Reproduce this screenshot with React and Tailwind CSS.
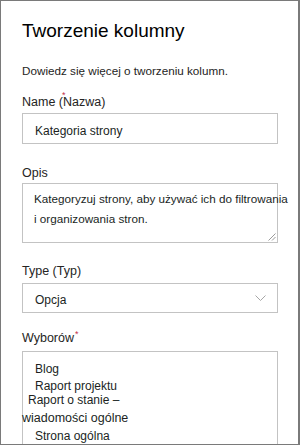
import React from "react";

const Asterisk = ({ className = "" }) => (
  <span className={`text-[#c4314b] text-[9px] leading-none ${className}`}>*</span>
);

const App = () => {
  return (
    <div className="w-[300px] h-[445px] overflow-hidden bg-white border border-[#7a7a7a] border-r-2 pl-[21px] pr-[20px] pt-[18px] font-['Liberation_Sans',Arial,sans-serif] text-[#201f1e]">
      {/* Title */}
      <h1 className="text-[19px] leading-[24px] text-black">Tworzenie kolumny</h1>

      <p className="mt-[20px] text-[11.7px] leading-[16px] text-[#252423]">
        Dowiedz się więcej o tworzeniu kolumn.
      </p>

      {/* Name */}
      <div className="relative mt-[15px] text-[12.5px] leading-[16px] text-[#252423]">
        Name (Nazwa)
        <Asterisk className="absolute left-[40px] -top-[3px]" />
      </div>
      <div className="mt-[3px] h-[31px] border border-[#c3c3c3] pl-[12px] pt-[9px] text-[12px] leading-[16px]">
        Kategoria strony
      </div>

      {/* Opis */}
      <div className="mt-[21px] text-[12.5px] leading-[16px] text-[#252423]">Opis</div>
      <div className="relative mt-[2px] h-[60px] border border-[#c3c3c3] pl-[11px] pt-[5px] text-[11.7px] leading-[20px] whitespace-nowrap">
        <div>Kategoryzuj strony, aby używać ich do filtrowania</div>
        <div>i organizowania stron.</div>
        <svg
          className="absolute right-[1px] bottom-[1px]"
          width="8"
          height="8"
          viewBox="0 0 8 8"
        >
          <path d="M7.5 0.5 L0.5 7.5 M7.5 4 L4 7.5" stroke="#9a9a9a" strokeWidth="1" fill="none" />
        </svg>
      </div>

      {/* Type */}
      <div className="mt-[20px] text-[12.5px] leading-[16px] text-[#252423]">Type (Typ)</div>
      <div className="mt-[4px] h-[30px] border border-[#c3c3c3] pl-[12px] pr-[11px] flex items-start justify-between">
        <span className="pt-[8px] text-[12px] leading-[16px]">Opcja</span>
        <svg className="mt-[11px]" width="11" height="6" viewBox="0 0 11 6">
          <path d="M0.5 0.5 L5.5 5.5 L10.5 0.5" stroke="#a6a6a6" strokeWidth="1" fill="none" />
        </svg>
      </div>

      {/* Wyborów */}
      <div className="mt-[17px] text-[12.5px] leading-[16px] text-[#252423]">
        Wyborów
        <Asterisk className="relative -top-[5px] ml-[1px]" />
      </div>
      <div className="mt-[5px] h-[120px] border border-[#c3c3c3] pt-[9px] text-[12px] leading-[17px] whitespace-nowrap">
        <div className="pl-[12px]">Blog</div>
        <div className="pl-[12px]">Raport projektu</div>
        <div className="pl-[5px] -mt-[3px]">Raport o stanie –</div>
        <div className="-ml-[1px] mt-[1px] text-[12.5px]">wiadomości ogólne</div>
        <div className="pl-[12px] mt-[1px]">Strona ogólna</div>
      </div>
    </div>
  );
};

export default App;
